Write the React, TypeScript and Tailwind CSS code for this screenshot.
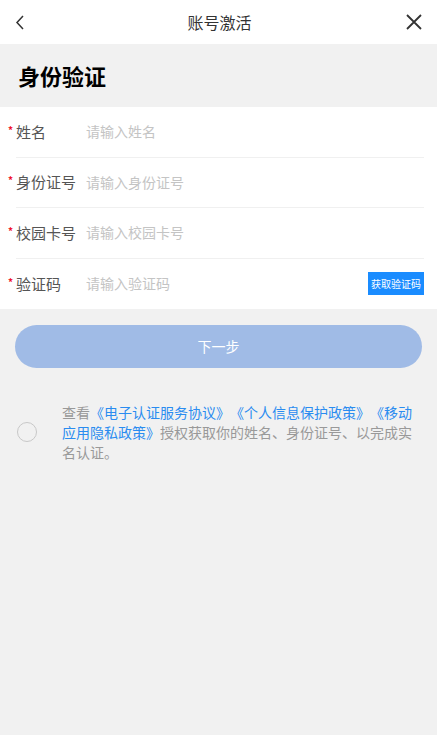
import { useState } from "react"

const fields = [
  { label: "姓名", placeholder: "请输入姓名" },
  { label: "身份证号", placeholder: "请输入身份证号" },
  { label: "校园卡号", placeholder: "请输入校园卡号" },
  { label: "验证码", placeholder: "请输入验证码", code: true },
]

export default function App() {
  const [agreed, setAgreed] = useState(false)

  return (
    <div
      className="min-h-[735px] bg-[#f1f1f1] text-[#333] [text-spacing-trim:space-all]"
      style={{ fontFamily: '"Noto Sans CJK SC", "Noto Sans", sans-serif' }}
    >
      {/* nav bar */}
      <div className="flex h-[44px] items-center justify-between bg-white px-[14px]">
        <svg width="14" height="18" viewBox="0 0 14 18" fill="none">
          <path d="M9 3L3 9.5L9 16" stroke="#333" strokeWidth="1.5" />
        </svg>
        <div className="ml-[6px] text-[16px] text-[#333]">账号激活</div>
        <svg width="18" height="18" viewBox="0 0 18 18" fill="none">
          <path d="M2 2L16 16M16 2L2 16" stroke="#333" strokeWidth="1.8" />
        </svg>
      </div>

      {/* title */}
      <div className="flex h-[63px] items-center px-[18px]">
        <h1 className="text-[22px] font-bold text-black">身份验证</h1>
      </div>

      {/* form */}
      <div className="bg-white">
        {fields.map((f, i) => (
          <div key={f.label} className="flex h-[50.5px] items-stretch">
            <div
              className={`ml-[16px] mr-[13px] flex flex-1 items-center ${
                i < fields.length - 1 ? "border-b border-[#f0f0f0]" : ""
              }`}
            >
              <div className="relative w-[70px] text-[15px] text-[#555]">
                <span className="absolute -left-[8px] top-[1px] text-[10px] font-bold text-[#f0142e]">*</span>
                {f.label}
              </div>
              <input
                placeholder={f.placeholder}
                className="flex-1 bg-transparent text-[14px] text-[#333] outline-none placeholder:text-[#c4c4c4]"
              />
              {f.code && (
                <button className="h-[23px] bg-[#1a8cff] px-[3px] text-[10px] text-white">获取验证码</button>
              )}
            </div>
          </div>
        ))}
      </div>

      {/* next */}
      <div className="px-[15px] pt-[16px]">
        <button className="h-[43px] w-full rounded-full bg-[#a0bbe6] text-[14px] text-white">下一步</button>
      </div>

      {/* agreement */}
      <div className="flex items-center pl-[17px] pr-[22px] pt-[34px]">
        <button
          onClick={() => setAgreed(!agreed)}
          className={`h-[20px] w-[20px] shrink-0 rounded-full border ${
            agreed ? "border-[#1a8cff] bg-[#1a8cff]" : "border-[#c8c8c8]"
          }`}
        />
        <p className="ml-[25px] text-[14px] leading-[20px] text-[#999]">
          查看<span className="text-[#2a8cf0]">《电子认证服务协议》《个人信息保护政策》《移动应用隐私政策》</span>
          授权获取你的姓名、身份证号、以完成实名认证。
        </p>
      </div>
    </div>
  )
}
